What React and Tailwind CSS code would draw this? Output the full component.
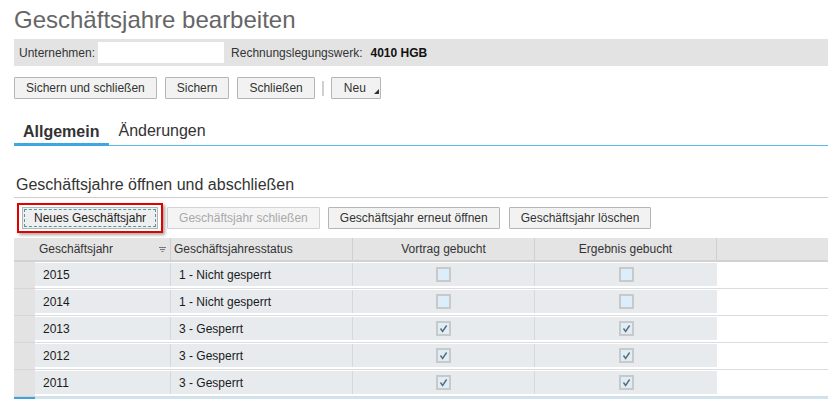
import { useState } from 'react'

const rows = [
  { year: '2015', status: '1 - Nicht gesperrt', vortrag: false, ergebnis: false },
  { year: '2014', status: '1 - Nicht gesperrt', vortrag: false, ergebnis: false },
  { year: '2013', status: '3 - Gesperrt', vortrag: true, ergebnis: true },
  { year: '2012', status: '3 - Gesperrt', vortrag: true, ergebnis: true },
  { year: '2011', status: '3 - Gesperrt', vortrag: true, ergebnis: true },
]

function Btn({ children, disabled, className = '' }) {
  return (
    <button
      className={`h-[22px] px-[11px] border rounded-[1px] text-[12px] leading-none whitespace-nowrap ${
        disabled
          ? 'bg-[#f4f4f4] border-[#d3d3d3] text-[#a9a9a9]'
          : 'bg-[#f2f2f2] border-[#b5b5b5] text-[#333]'
      } ${className}`}
    >
      {children}
    </button>
  )
}

function Check({ checked }) {
  return (
    <div className="w-[15px] h-[15px] border-2 border-[#c9c9c9] bg-[#ddeefb] flex items-center justify-center">
      {checked && (
        <svg width="11" height="11" viewBox="0 0 11 11">
          <path d="M2.5 5.5 L4.6 8.5 L8.6 2.5" fill="none" stroke="#666" strokeWidth="1.4" />
        </svg>
      )}
    </div>
  )
}

function SortIcon() {
  return (
    <svg width="7" height="5" viewBox="0 0 7 5" className="shrink-0">
      <path d="M0 0.5 H7 M1 2.5 H6 M2.5 4.5 H4.5" stroke="#777" strokeWidth="1" />
    </svg>
  )
}

export default function App() {
  const [tab] = useState('allgemein')

  return (
    <div className="w-[828px] h-[399px] overflow-hidden bg-white pl-[14px] font-['Liberation_Sans',Arial,sans-serif] text-[12px] text-[#333]">
      {/* Title */}
      <h1 className="pt-[6px] text-[24px] leading-[28px] text-[#666]">Geschäftsjahre bearbeiten</h1>

      {/* Header bar */}
      <div className="mt-[5px] h-[27px] bg-[#e3e3e3] flex items-center pl-[5px]">
        <span>Unternehmen:</span>
        <div className="ml-[3px] w-[126px] h-[21px] bg-white" />
        <span className="ml-[7px]">Rechnungslegungswerk:</span>
        <span className="ml-2 font-bold text-[#111]">4010 HGB</span>
      </div>

      {/* Toolbar */}
      <div className="mt-[11px] flex items-center">
        <Btn>Sichern und schließen</Btn>
        <Btn className="ml-2">Sichern</Btn>
        <Btn className="ml-2">Schließen</Btn>
        <div className="ml-[7px] w-[2px] h-[15px] bg-[#d0d0d0]" />
        <button className="ml-[7px] h-[22px] pl-3 pr-[1px] border border-[#b5b5b5] bg-[#f2f2f2] rounded-[1px] flex items-center text-[12px]">
          <span>Neu</span>
          <svg width="5" height="5" viewBox="0 0 5 5" className="ml-[8px] mt-[7px]">
            <polygon points="0,5 5,5 5,0" fill="#333" />
          </svg>
        </button>
      </div>

      {/* Tabs */}
      <div className="mt-[22px] flex items-end border-b border-[#5ab7e8]">
        <div
          className={`pl-[9px] pr-[10px] pb-[1px] text-[16px] leading-[20px] font-bold text-[#333] -mb-px border-b-[3px] ${
            tab === 'allgemein' ? 'border-[#3ea6e0]' : 'border-transparent'
          }`}
        >
          Allgemein
        </div>
        <div className="pl-[9px] pb-[4px] text-[16px] leading-[20px] text-[#333]">Änderungen</div>
      </div>

      {/* Section */}
      <div className="mt-[29px] pl-[2px] pb-[2px] border-b border-[#cfcfcf] text-[16px] leading-[20px] text-[#333]">
        Geschäftsjahre öffnen und abschließen
      </div>

      <div className="mt-[9px] pl-2 flex items-center">
        <div className="relative">
          <button className="relative h-[22px] px-[11px] border border-[#b5b5b5] bg-[#efefef] text-[12px] text-[#222] whitespace-nowrap">
            <span className="absolute inset-[1px] border border-dashed border-[#4e9a9c]" />
            Neues Geschäftsjahr
          </button>
          <div className="absolute -left-[5px] -top-[4px] w-[146px] h-[30px] border-2 border-[#e50000] shadow-[2px_2px_3px_rgba(0,0,0,0.35)] pointer-events-none" />
        </div>
        <Btn disabled className="ml-[9px]">Geschäftsjahr schließen</Btn>
        <Btn className="ml-2">Geschäftsjahr erneut öffnen</Btn>
        <Btn className="ml-[9px]">Geschäftsjahr löschen</Btn>
      </div>

      {/* Table */}
      <div className="mt-[9px]">
        <div className="flex h-[24px] bg-[#e4e4e4] border-b-2 border-[#d2d2d2]">
          <div className="w-[21px] shrink-0" />
          <div className="w-[136px] shrink-0 flex items-center pl-[4px] pr-[4px] border-r border-[#cfcfcf]">
            <span className="flex-1">Geschäftsjahr</span>
            <SortIcon />
          </div>
          <div className="w-[182px] shrink-0 flex items-center pl-[3px] border-r border-[#cfcfcf]">Geschäftsjahresstatus</div>
          <div className="w-[182px] shrink-0 flex items-center justify-center border-r border-[#cfcfcf]">Vortrag gebucht</div>
          <div className="w-[182px] shrink-0 flex items-center justify-center border-r border-[#cfcfcf]">Ergebnis gebucht</div>
          <div className="flex-1" />
        </div>

        {rows.map((r) => (
          <div key={r.year} className="flex h-[27px]">
            <div className="w-[21px] shrink-0 bg-[#e3e3e3] border-b border-[#d6d6d6]" />
            <div className="flex-1 flex flex-col pt-px">
              <div className="flex h-[23px] text-[#1a1a1a]">
                <div className="w-[136px] shrink-0 bg-[#e8ebee] flex items-center pl-[8px] border-r border-[#d6d9dc]">{r.year}</div>
                <div className="w-[182px] shrink-0 bg-[#e8ebee] flex items-center pl-[8px] border-r border-[#d6d9dc]">{r.status}</div>
                <div className="w-[182px] shrink-0 bg-[#e8ebee] flex items-center justify-center border-r border-[#d6d9dc]">
                  <Check checked={r.vortrag} />
                </div>
                <div className="w-[182px] shrink-0 bg-[#e8ebee] flex items-center justify-center">
                  <Check checked={r.ergebnis} />
                </div>
                <div className="flex-1" />
              </div>
              <div className="mt-[2px] h-px bg-[#dcdcdc]" />
            </div>
          </div>
        ))}

        {/* selected row, cut off by the viewport */}
        <div className="flex h-[27px]">
          <div className="w-[21px] shrink-0 bg-[#3fa2e0]" />
          <div className="flex-1 bg-[#cde5f3]" />
        </div>
      </div>
    </div>
  )
}
